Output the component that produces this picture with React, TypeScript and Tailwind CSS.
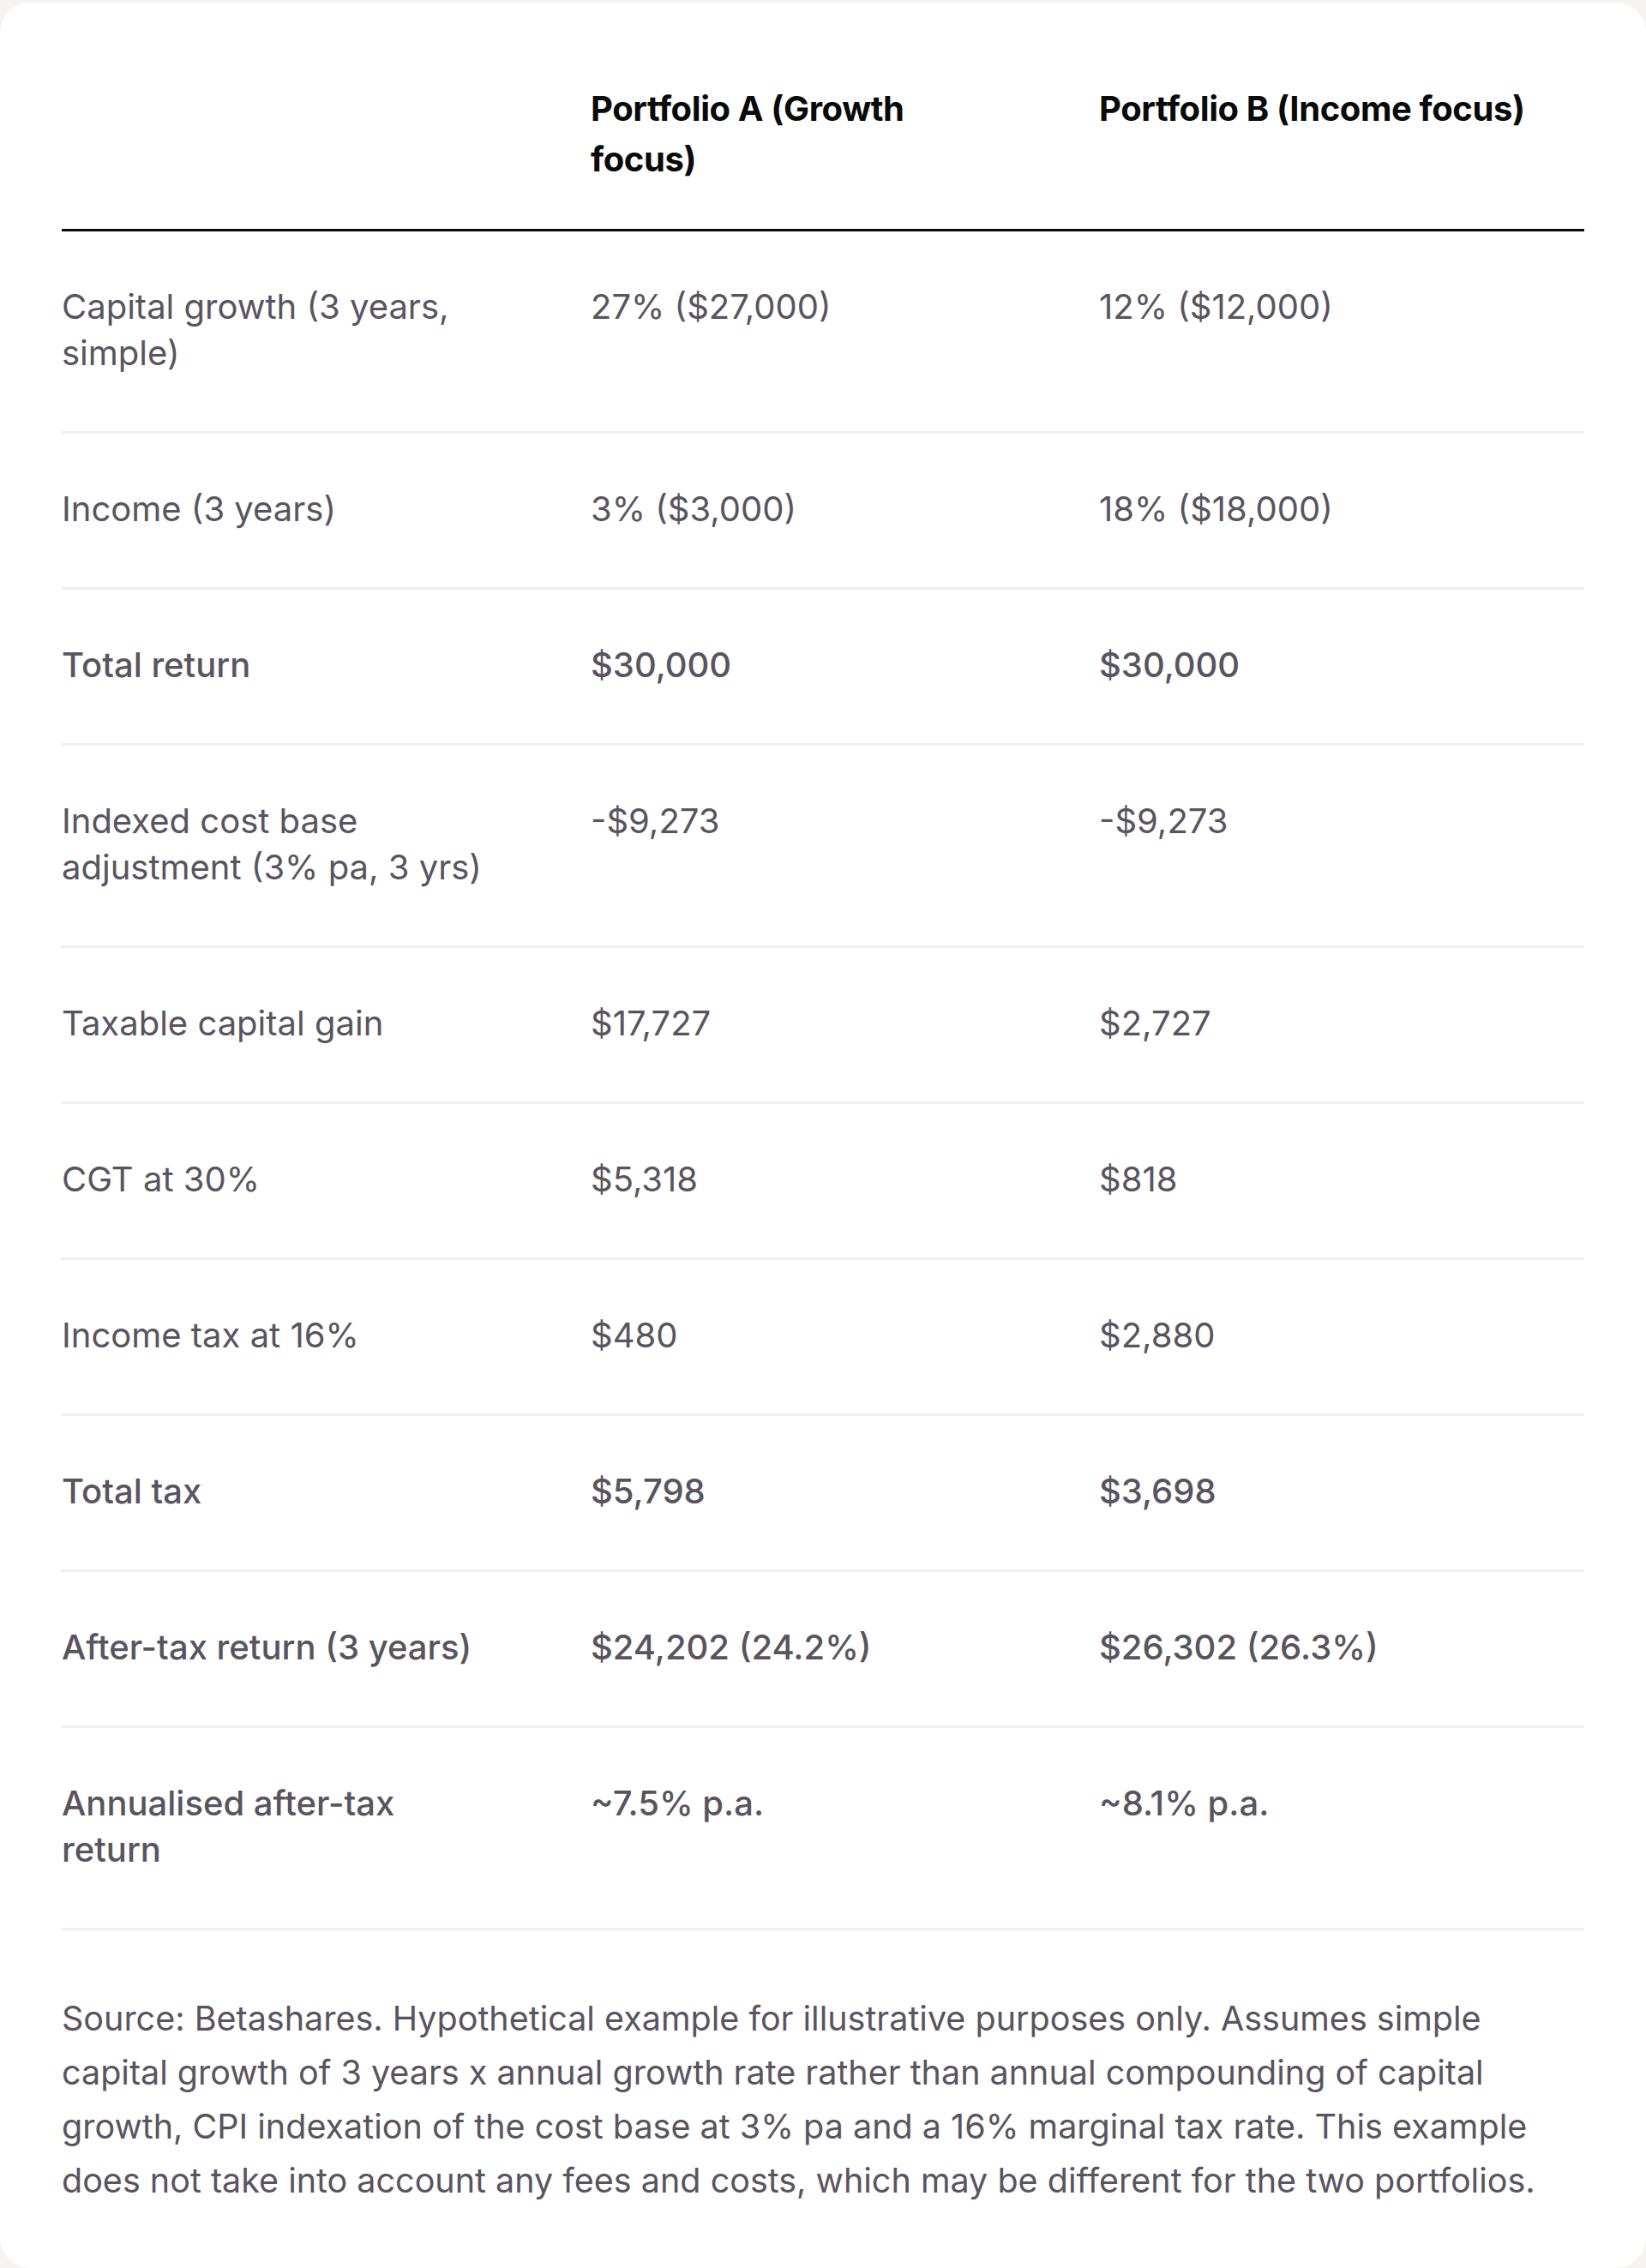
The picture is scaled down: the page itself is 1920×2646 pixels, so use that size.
import React from "react";

type Row = { label: React.ReactNode; a: string; b: string; strong?: boolean };

const rows: Row[] = [
  { label: <>Capital growth (3 years,<br />simple)</>, a: "27% ($27,000)", b: "12% ($12,000)" },
  { label: "Income (3 years)", a: "3% ($3,000)", b: "18% ($18,000)" },
  { label: "Total return", a: "$30,000", b: "$30,000", strong: true },
  { label: <>Indexed cost base<br />adjustment (3% pa, 3 yrs)</>, a: "-$9,273", b: "-$9,273" },
  { label: "Taxable capital gain", a: "$17,727", b: "$2,727" },
  { label: "CGT at 30%", a: "$5,318", b: "$818" },
  { label: "Income tax at 16%", a: "$480", b: "$2,880" },
  { label: "Total tax", a: "$5,798", b: "$3,698", strong: true },
  { label: "After-tax return (3 years)", a: "$24,202 (24.2%)", b: "$26,302 (26.3%)", strong: true },
  { label: <>Annualised after-tax<br />return</>, a: "~7.5% p.a.", b: "~8.1% p.a.", strong: true },
];

export default function App() {
  return (
    <div className="min-h-[2646px] bg-[#f6f3f0] py-[3px] font-['Inter',sans-serif]">
      <div className="rounded-[36px] bg-white px-[72px] pt-[72px] pb-[70px]">
        <table className="w-full table-fixed border-collapse text-left">
          <colgroup>
            <col className="w-[617px]" />
            <col className="w-[593px]" />
            <col />
          </colgroup>
          <thead>
            <tr className="border-b-[3px] border-[#0a0a0a]">
              <th className="pt-[22px] pb-[52px]" />
              <th className="pt-[22px] pb-[52px] pr-[24px] align-top text-[40px] leading-[59px] font-bold tracking-[-0.4px] text-[#0a0a0a]">
                Portfolio A (Growth
                <br />
                focus)
              </th>
              <th className="pt-[22px] pb-[52px] align-top text-[40px] leading-[59px] font-bold tracking-[-0.4px] whitespace-nowrap text-[#0a0a0a]">
                Portfolio B (Income focus)
              </th>
            </tr>
          </thead>
          <tbody>
            {rows.map((r, i) => {
              const w = r.strong ? "font-medium" : "font-normal";
              return (
                <tr key={i} className="border-b-[3px] border-[#f1eeeb]">
                  <td className={`pt-[61px] pb-[64px] pr-[24px] align-top text-[40px] leading-[54px] text-[#5a5460] ${w}`}>
                    {r.label}
                  </td>
                  <td className={`pt-[61px] pb-[64px] pr-[24px] align-top text-[40px] leading-[54px] text-[#5a5460] whitespace-nowrap ${w}`}>
                    {r.a}
                  </td>
                  <td className={`pt-[61px] pb-[64px] align-top text-[40px] leading-[54px] text-[#5a5460] whitespace-nowrap ${w}`}>
                    {r.b}
                  </td>
                </tr>
              );
            })}
          </tbody>
        </table>
        <p className="mt-[72px] text-[39.5px] leading-[63px] text-[#5a5460]">
          Source: Betashares. Hypothetical example for illustrative purposes only. Assumes simple capital growth of 3
          years x annual growth rate rather than annual compounding of capital growth, CPI indexation of the cost base at
          3% pa and a 16% marginal tax rate. This example does not take into account any fees and costs, which may be
          different for the two portfolios.
        </p>
      </div>
    </div>
  );
}
